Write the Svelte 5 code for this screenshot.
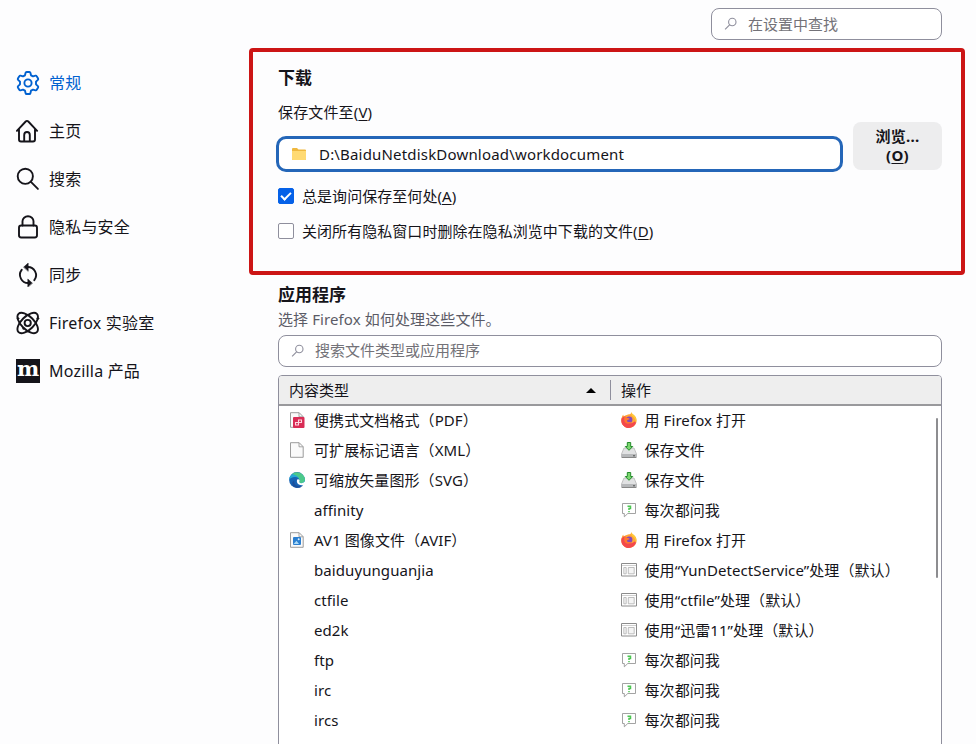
<script>
  const categories = [
    { id: 'general', label: '常规' },
    { id: 'home', label: '主页' },
    { id: 'find', label: '搜索' },
    { id: 'lock', label: '隐私与安全' },
    { id: 'sync', label: '同步' },
    { id: 'labs', label: 'Firefox 实验室' },
    { id: 'mozilla', label: 'Mozilla 产品' }
  ]

  const handlers = [
    { icon: 'pdf', type: '便携式文档格式（PDF）', actionIcon: 'firefox', action: '用 Firefox 打开' },
    { icon: 'file', type: '可扩展标记语言（XML）', actionIcon: 'save', action: '保存文件' },
    { icon: 'edge', type: '可缩放矢量图形（SVG）', actionIcon: 'save', action: '保存文件' },
    { type: 'affinity', actionIcon: 'ask', action: '每次都问我' },
    { icon: 'avif', type: 'AV1 图像文件（AVIF）', actionIcon: 'firefox', action: '用 Firefox 打开' },
    { type: 'baiduyunguanjia', actionIcon: 'app', action: '使用“YunDetectService”处理（默认）' },
    { type: 'ctfile', actionIcon: 'app', action: '使用“ctfile”处理（默认）' },
    { type: 'ed2k', actionIcon: 'app', action: '使用“迅雷11”处理（默认）' },
    { type: 'ftp', actionIcon: 'ask', action: '每次都问我' },
    { type: 'irc', actionIcon: 'ask', action: '每次都问我' },
    { type: 'ircs', actionIcon: 'ask', action: '每次都问我' }
  ]

  let selected = $state('general')
  let folder = $state('D:\\BaiduNetdiskDownload\\workdocument')
  let alwaysAsk = $state(true)
  let deletePrivate = $state(false)
</script>

{#snippet categoryIcon(id)}
  {#if id === 'mozilla'}
    <span class="mozilla">m</span>
  {:else}
    <svg class="category-icon" viewBox="0 0 24 24" aria-hidden="true">
      {#if id === 'general'}
        <path d="M10.600 1h2.800q.8 0 1 .8l.6 2.500 2 1.100 2.500-.7q.8-.2 1.200.5l1.400 2.300q.4.700-.2 1.300L20 10.700v2.600l1.900 1.900q.6.600.2 1.300l-1.400 2.300q-.4.700-1.200.5l-2.500-.7-2 1.100-.6 2.500q-.2.800-1 .8h-2.800q-.8 0-1-.8L9 19.700l-2-1.100-2.500.7q-.8.200-1.200-.5l-1.400-2.300q-.4-.700.2-1.300L4 13.300v-2.600L2.100 8.800q-.6-.6-.2-1.300l1.400-2.300q.4-.7 1.200-.5l2.500.7 2-1.100.6-2.500q.2-.8 1-.8z" />
        <circle cx="12" cy="12" r="3.600" />
      {:else if id === 'home'}
        <path d="M.9 11.800 9.700 2.500q1.300-1.300 2.600 0l8.800 9.300M3 10v10.500q0 2 2 2h12q2 0 2-2V10M8.200 22v-6q0-3 2.800-3t2.800 3v6" />
      {:else if id === 'find'}
        <circle cx="9.300" cy="9.300" r="7.600" />
        <path d="m14.900 14.900 7 7" />
      {:else if id === 'lock'}
        <rect x="3" y="10.500" width="18" height="12" rx="2.200" />
        <path d="M6.500 10.500V6.300a5.500 5 0 0 1 11 0v4.200" />
      {:else if id === 'sync'}
        <path d="M11.500 4A8.200 8.200 0 0 1 18.300 17.200M12.500 20A8.200 8.200 0 0 1 5.700 6.800" />
        <path class="solid" d="m7.800 4 4.400-4v8zM16.200 20l-4.400-4v8z" />
      {:else}
        <ellipse cx="11.700" cy="12" rx="13" ry="6.400" transform="rotate(45 11.700 12)" />
        <ellipse cx="11.700" cy="12" rx="13" ry="6.400" transform="rotate(-45 11.700 12)" />
        <circle cx="11.700" cy="12" r="3.100" />
        <circle class="solid" cx="21.800" cy="7.500" r="1.100" />
        <circle class="solid" cx="2" cy="7.500" r="1" />
        <circle class="solid" cx="7.500" cy="17.500" r=".9" />
      {/if}
    </svg>
  {/if}
{/snippet}

{#snippet rowIcon(id)}
  <svg class="row-icon" viewBox="0 0 16 16" aria-hidden="true">
    {#if id === 'pdf' || id === 'file' || id === 'avif'}
      <path d="M1.500.7h8.700l4 4v10.600H1.500z" fill="#fafafa" stroke="#919191" stroke-width=".9" />
      <path d="M10 .8v4h4" fill="none" stroke="#919191" stroke-width=".8" />
    {/if}
    {#if id === 'pdf'}
      <rect x="4" y="5" width="11.500" height="11" rx="1" fill="#d92c55" />
      <path d="M6.500 13v-2.500h3V13zM9.500 10.500V8h3v2.500z" fill="none" stroke="#ffd5df" stroke-width="1.100" />
    {:else if id === 'avif'}
      <rect x="4" y="5" width="8" height="8" rx="1" fill="#2b7fd0" />
      <path d="m4.500 12 3-3.200L10 12z" fill="#a9daf8" />
      <circle cx="9.700" cy="7.200" r="1" fill="#d9f0ff" />
    {:else if id === 'edge'}
      <circle cx="8" cy="8" r="7.900" fill="#1763b4" />
      <path d="M.1 8C.3 4 3.500 1 7 1c5 0 8.700 3 9 6.500.1 2.400-1.500 3.700-3.800 3.700-1.900 0-2.500-.8-1.800-1.800C11 7 9 5 6 5.100 3 5.200.8 6.600.1 8z" fill="#25a9d6" />
      <path d="M3 2C8-2 15.300 1.500 15.900 7c.3 2.600-1.300 4.100-3.700 4.100-1.900 0-2.400-.8-1.800-1.800C11 6 8 3 3 2z" fill="#4cc98a" />
      <path d="M5.300 8.500C4.500 12 8 15.500 13.500 14 11 16.500 7 16.200 4.500 14.500 2.500 12 3 9.500 5.300 8.500z" fill="#1b4f9c" />
      <path d="M8.500 7.200c1.800-.3 2.500.8 1.900 2.100-.6 1 .2 1.800 1.800 1.900q2.200 0 3.800-1.800v3.100c-3.100 1.600-7 .5-7.900-2-.4-1.300-.3-2.500.4-3.300z" fill="#fff" />
    {:else if id === 'firefox'}
      <path d="M8 2.300C10 2.300 10 1 10.400.2c.6 2.300 3.500 2.900 4.500 5.400C17 11 13 16 8 16S-.7 11.500.5 6.600C.8 5 1.300 3.700 2.200 2.800l.6 1.800C4 3.400 5.500 3 8 2.300z" fill="#ffa436" />
      <path d="M.5 6.600C1.500 6 2.400 4.400 2.800 4.600 4.500 4 5 5 6.200 5.600L5 8c.6 3 5 4.500 7.500 2.200 1-1 2-1 2.800.1C14 14 11 16 8 16 3 16-.7 11.500.5 6.600z" fill="#f3484c" />
      <circle cx="8.200" cy="7.800" r="3.200" fill="#8548bd" />
      <path d="M3.200 5.300c1.500-.5 2.600.1 3.500.8 1 .2 1.800.2 1.900.8-.7 1-2.500.6-2.700 2 .9 1.500 3.300 1.500 4.600.6-1 3-6.300 2.900-7.200-.7z" fill="#ff782f" />
      <path d="M10.400.2c.6 2.300 3.500 2.900 4.500 5.400.8 2 .7 4-.1 5.700.2-3.600-1.300-5.800-3.300-7.100-1-.8-1.600-2.100-1.100-4z" fill="#ffcb38" />
    {:else if id === 'save'}
      <path d="M3 6h10l2.500 6v3.500H.5V12z" fill="#e1e2e3" stroke="#b5b5b5" stroke-width=".8" />
      <path d="M.6 12h14.800v3.500H.6z" fill="#b6b8ba" />
      <path d="M1 15.500h14" stroke="#888" />
      <path d="M12 13.800h2" stroke="#505050" />
      <path d="M6.300.5h3.400v4h2L8 8.300 4.300 4.500h2z" fill="#7bd66f" stroke="#238c2b" stroke-width="1" />
    {:else if id === 'ask'}
      <path d="M1.500 1.500h13v10H6.800l-3.500 3.300v-3.300H1.500z" fill="#fff" stroke="#999" stroke-width=".9" />
      <path d="M6.500 4.200h3v2.200H8v1.500M8 9v1.300" fill="none" stroke="#4cc552" stroke-width="1.500" />
    {:else if id === 'app'}
      <path d="M.5 1.500h15v12.500H.5z" fill="#fff" stroke="#8c8c8c" />
      <path d="M1 3.500h14" stroke="#d0d0d0" />
      <path d="M2.800 5.500h2.400v6.300H2.800zM7.300 5.500h5.900v6.300H7.300z" fill="#f4f4f4" stroke="#b0b0b0" stroke-width=".8" />
    {/if}
  </svg>
{/snippet}

{#snippet searchIcon()}
  <svg class="search-icon" viewBox="0 0 14 14" aria-hidden="true">
    <circle cx="8.300" cy="5" r="3.700" />
    <path d="m5.600 7.800-4.500 4.500" />
  </svg>
{/snippet}

<div class="preferences">
  <nav>
    {#each categories as category (category.id)}
      <button
        class="category"
        class:selected={selected === category.id}
        onclick={() => (selected = category.id)}
      >
        {@render categoryIcon(category.id)}
        <span>{category.label}</span>
      </button>
    {/each}
  </nav>

  <main>
    <label class="search settings-search">
      {@render searchIcon()}
      <input placeholder="在设置中查找" />
    </label>

    <section class="downloads">
      <h2>下载</h2>
      <label class="save-label" for="folder">保存文件至(<u>V</u>)</label>
      <div class="folder-row">
        <div class="folder">
          <svg viewBox="0 0 16 16" aria-hidden="true">
            <path d="M1 3q0-1 1-1h4l1.500 1.600H14q1 0 1 1V13q0 1-1 1H2q-1 0-1-1z" fill="#efb83f" />
            <path d="M1 5h14v8q0 1-1 1H2q-1 0-1-1z" fill="#ffda73" />
          </svg>
          <input id="folder" bind:value={folder} />
        </div>
        <button class="browse">浏览...<br />(<u>O</u>)</button>
      </div>
      <label class="check">
        <input type="checkbox" bind:checked={alwaysAsk} />
        <span>总是询问保存至何处(<u>A</u>)</span>
      </label>
      <label class="check">
        <input type="checkbox" bind:checked={deletePrivate} />
        <span>关闭所有隐私窗口时删除在隐私浏览中下载的文件(<u>D</u>)</span>
      </label>
    </section>

    <section class="applications">
      <h2>应用程序</h2>
      <p>选择 Firefox 如何处理这些文件。</p>
      <label class="search">
        {@render searchIcon()}
        <input placeholder="搜索文件类型或应用程序" />
      </label>
      <div class="handlers">
        <div class="handlers-header">
          <div class="type-header">
            内容类型
            <svg viewBox="0 0 10 5" aria-hidden="true"><path d="M0 5 5 0l5 5z" /></svg>
          </div>
          <div class="action-header">操作</div>
        </div>
        <div class="rows">
          {#each handlers as handler (handler.type)}
            <div class="row">
              <div class="cell">
                {@render rowIcon(handler.icon)}
                <span>{handler.type}</span>
              </div>
              <div class="cell action">
                {@render rowIcon(handler.actionIcon)}
                <span>{handler.action}</span>
              </div>
            </div>
          {/each}
          <div class="scrollbar"></div>
        </div>
      </div>
    </section>
  </main>
</div>

<style>
  :global(body) {
    overflow: hidden;
    background: #fdfdfe;
  }

  .preferences {
    display: flex;
    height: 744px;
    overflow: hidden;
    color: #15141a;
    font: 15px/20px 'Noto Sans', 'Noto Sans CJK SC', sans-serif;
  }

  button,
  input {
    font: inherit;
    letter-spacing: inherit;
    color: inherit;
    border: 0;
    padding: 0;
    margin: 0;
    background: none;
    outline: 0;
  }

  u {
    text-underline-offset: 2px;
    text-decoration-thickness: 1px;
  }

  nav {
    width: 249px;
    flex: none;
    padding: 59px 0 0 16px;
    box-sizing: border-box;
  }

  .category {
    display: flex;
    align-items: center;
    gap: 9px;
    width: 100%;
    height: 48px;
    font-size: 16px;
    letter-spacing: 0.2px;
    white-space: nowrap;
  }

  .category.selected {
    color: #0061d0;
  }

  .category-icon {
    width: 24px;
    height: 24px;
    fill: none;
    stroke: currentColor;
    stroke-width: 1.9;
    stroke-linejoin: round;
    stroke-linecap: round;
  }

  .category-icon .solid {
    fill: currentColor;
    stroke-width: 0.5;
  }

  .mozilla {
    display: flex;
    align-items: center;
    justify-content: center;
    width: 24px;
    height: 24px;
    padding-bottom: 4px;
    box-sizing: border-box;
    background: #15141a;
    color: #fff;
    font: bold 21px/20px 'DejaVu Serif', serif;
    letter-spacing: 0;
  }

  main {
    width: 716px;
    flex: none;
  }

  .search {
    display: flex;
    align-items: center;
    height: 32px;
    box-sizing: border-box;
    border: 1px solid #8f8f9d;
    border-radius: 8px;
    padding-left: 12px;
    background: #fff;
  }

  .settings-search {
    width: 231px;
    margin: 8px 23px 8px auto;
  }

  .search-icon {
    width: 14px;
    height: 14px;
    margin-right: 10px;
    fill: none;
    stroke: #8f8f9d;
    stroke-width: 1.1;
  }

  .search input {
    flex: 1;
    min-width: 0;
  }

  .applications .search input {
    padding-bottom: 2px;
  }

  .search input::placeholder {
    color: #737278;
    opacity: 1;
  }

  h2 {
    margin: 0;
    font-size: 17px;
    line-height: 24px;
    font-weight: 700;
  }

  .downloads {
    height: 227px;
    box-sizing: border-box;
    border: 4px solid #cc1515;
    border-radius: 4px;
    padding: 14px 19px 0 25px;
  }

  .save-label {
    display: block;
    margin-top: 12px;
    letter-spacing: 0.15px;
  }

  .folder-row {
    display: flex;
    align-items: center;
    gap: 10px;
    height: 48px;
    margin-left: -2px;
  }

  .folder {
    flex: 1;
    display: flex;
    align-items: center;
    height: 36px;
    margin-top: 16px;
    box-sizing: border-box;
    border: 3px solid #2466b8;
    border-radius: 10px;
    padding-left: 12px;
    background: #fff;
    letter-spacing: 0.18px;
  }

  .folder svg {
    width: 16px;
    height: 16px;
    margin-right: 12px;
  }

  .folder input {
    flex: 1;
  }

  .browse {
    width: 89px;
    height: 48px;
    background: #ededee;
    border-radius: 8px;
    font-weight: 700;
    line-height: 19px;
    letter-spacing: 0.3px;
  }

  .check {
    display: flex;
    align-items: center;
    gap: 8px;
    height: 35px;
    letter-spacing: 0.05px;
  }

  .folder-row + .check {
    margin-top: 8px;
  }

  .check input {
    appearance: none;
    width: 16px;
    height: 16px;
    box-sizing: border-box;
    border: 1px solid #8f8f9d;
    border-radius: 2px;
    background: #fff;
  }

  .check input:checked {
    border-color: #0561e8;
    background: #0561e8;
    display: grid;
    place-items: center;
  }

  .check input:checked::after {
    content: '';
    width: 8px;
    height: 4px;
    border: solid #fff;
    border-width: 0 0 2px 2px;
    transform: translateY(-1px) rotate(-45deg);
  }

  .applications {
    padding: 8px 23px 0 29px;
  }

  .applications p {
    margin: 2px 0 6px;
    color: #5b5b66;
    letter-spacing: 0.1px;
  }

  .handlers {
    height: 380px;
    margin-top: 8px;
    border: 1px solid #8f8f9d;
    border-radius: 4px 4px 0 0;
    background: #fff;
    overflow: hidden;
  }

  .handlers-header {
    display: flex;
    align-items: center;
    height: 28px;
    border-bottom: 2px solid #99999c;
    background: #eee;
  }

  .type-header {
    display: flex;
    align-items: center;
    justify-content: space-between;
    width: 332px;
    box-sizing: border-box;
    padding: 0 14px 0 10px;
    border-right: 1px solid #8f8f9d;
  }

  .type-header svg {
    width: 10px;
    height: 5px;
  }

  .action-header {
    padding-left: 10px;
  }

  .rows {
    position: relative;
    margin-top: -1px;
  }

  .row {
    display: flex;
    height: 30px;
    letter-spacing: 0.08px;
  }

  .cell {
    display: flex;
    align-items: center;
    flex: 1;
    padding-left: 10px;
    white-space: nowrap;
  }

  .cell.action {
    padding-left: 11px;
  }

  .row-icon {
    width: 16px;
    height: 16px;
    margin-right: 9px;
  }

  .action .row-icon {
    margin-right: 8px;
  }

  .scrollbar {
    position: absolute;
    top: 13px;
    right: 3px;
    width: 2px;
    height: 160px;
    background: #8d8d90;
    border-radius: 1px;
  }
</style>
